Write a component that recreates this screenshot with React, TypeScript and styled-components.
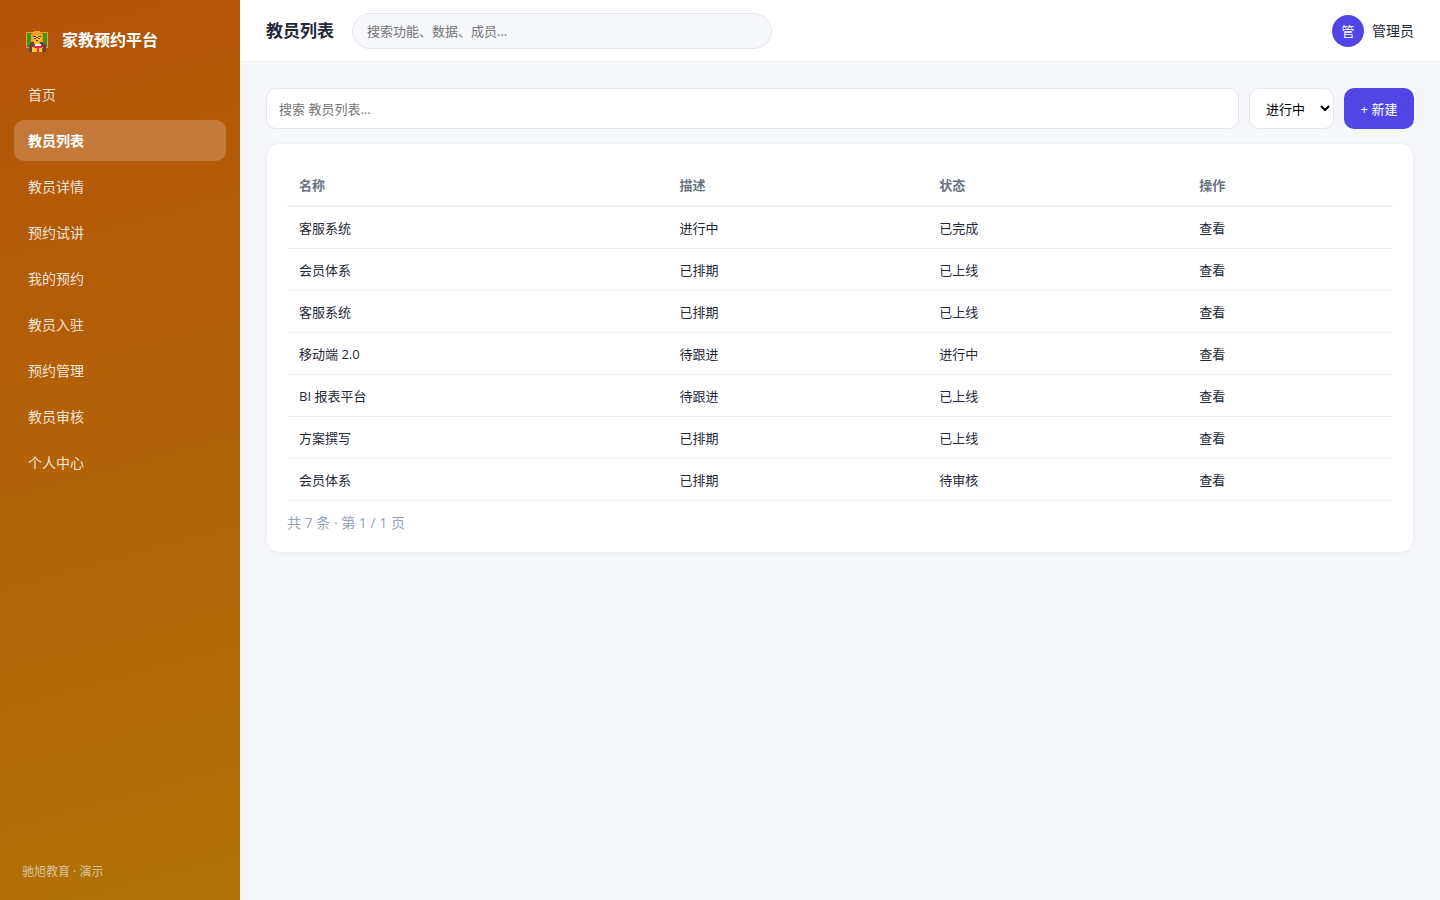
import React from 'react';
import styled, { createGlobalStyle } from 'styled-components';

const GlobalStyle = createGlobalStyle`
  *, *::before, *::after { box-sizing: border-box; }
  body {
    margin: 0;
    background: #f5f7fb;
    color: #1f2937;
    font-family: "Open Sans", "Noto Sans CJK SC", sans-serif;
    font-size: 14px;
    line-height: 20px;
  }
  button, input, select { font: inherit; }
`;

const Layout = styled.div`
  display: flex;
  min-height: 100vh;
`;

const Sidebar = styled.aside`
  display: flex;
  flex-direction: column;
  flex: 0 0 240px;
  padding: 22px 14px 18px;
  background: linear-gradient(165deg, #b45309, #b07207);
  color: #fff;
`;

const Brand = styled.div`
  display: flex;
  align-items: center;
  gap: 14px;
  height: 36px;
  margin-bottom: 16px;
  padding: 0 12px;
  font-size: 16px;
  font-weight: 700;
`;

const Nav = styled.nav`
  display: flex;
  flex-direction: column;
  gap: 5px;
`;

const NavLink = styled.a<{ $active?: boolean }>`
  display: flex;
  align-items: center;
  height: 41px;
  padding: 0 14px;
  border-radius: 10px;
  background: ${(p) => (p.$active ? 'rgba(255, 255, 255, 0.2)' : 'transparent')};
  color: ${(p) => (p.$active ? '#fff' : 'rgba(255, 255, 255, 0.85)')};
  font-weight: ${(p) => (p.$active ? 700 : 400)};
  text-decoration: none;
`;

const SidebarFooter = styled.div`
  margin-top: auto;
  padding: 0 8px;
  color: rgba(255, 255, 255, 0.6);
  font-size: 12px;
`;

const Main = styled.div`
  display: flex;
  flex: 1;
  flex-direction: column;
  min-width: 0;
`;

const Topbar = styled.header`
  display: flex;
  align-items: center;
  gap: 18px;
  height: 62px;
  padding: 0 26px;
  border-bottom: 1px solid #eceef3;
  background: #fff;
`;

const Title = styled.h1`
  margin: 0;
  font-size: 17px;
  font-weight: 700;
`;

const GlobalSearch = styled.input`
  flex: 0 1 420px;
  min-width: 0;
  height: 36px;
  padding: 0 14px;
  border: 1px solid #e5e7ef;
  border-radius: 18px;
  background: #f5f7fb;
  font-size: 13px;
  &::placeholder { color: #757575; }
`;

const User = styled.div`
  display: flex;
  align-items: center;
  gap: 8px;
  margin-left: auto;
`;

const Avatar = styled.span`
  display: grid;
  place-items: center;
  width: 32px;
  height: 32px;
  border-radius: 50%;
  background: #4f46e5;
  color: #fff;
  font-size: 13px;
`;

const Content = styled.main`
  padding: 26px;
`;

const Toolbar = styled.div`
  display: flex;
  gap: 10px;
  height: 41px;
  margin-bottom: 14px;
`;

const ListSearch = styled.input`
  flex: 1;
  min-width: 0;
  padding: 0 12px;
  border: 1px solid #e5e7ef;
  border-radius: 10px;
  background: #fff;
  font-size: 13px;
  &::placeholder { color: #757575; }
`;

const StatusSelect = styled.select`
  width: 85px;
  padding: 0 0 0 12px;
  border: 1px solid #e5e7ef;
  border-radius: 10px;
  background: #fff;
  color: #000;
  font-size: 13px;
`;

const CreateButton = styled.button`
  width: 70px;
  padding: 0;
  border: 0;
  border-radius: 10px;
  background: #4f46e5;
  color: #fff;
  font-size: 13px;
`;

const Card = styled.section`
  padding: 20px;
  border: 1px solid #f0f1f6;
  border-radius: 14px;
  background: #fff;
  box-shadow: 0 1px 4px rgba(30, 41, 80, 0.05);
`;

const Table = styled.table`
  width: 100%;
  border-collapse: separate;
  border-spacing: 0;
  table-layout: fixed;
  font-size: 13px;
`;

const HeadCell = styled.th<{ $width?: string }>`
  width: ${(p) => p.$width ?? 'auto'};
  height: 43px;
  padding: 0 12px;
  border-bottom: 2px solid #eef0f4;
  color: #6b7280;
  font-weight: 600;
  text-align: left;
`;

const Cell = styled.td`
  height: 42px;
  padding: 0 12px;
  border-bottom: 1px solid #eeeff2;
`;

const Pagination = styled.p`
  margin: 12px 0 0;
  color: #94a3b8;
  font-size: 14px;
  line-height: 19px;
`;

const TeacherIcon = () => (
  <svg width="22" height="26" viewBox="0 -4 22 26" shapeRendering="crispEdges" aria-hidden="true">
    <path fill="#e59a4b" d="M0 1h22v16H0z" />
    <path fill="#43921c" d="M1 2h20v14H1z" />
    <path fill="#f59e1b" d="M8 0h6v1h2v2h1v9h-2v1H7v-1H5V3h1V1h2z" />
    <path fill="#ffb92e" d="M8 4h6v1h1v5h-1v2h-1v2H9v-2H8v-2H7V5h1z" />
    <path fill="#ffd98a" d="M8 6h2v1H8zM12 6h2v1h-2z" />
    <path fill="#53351f" d="M7 5h3v1H7zM12 5h3v1h-3zM8 7h2v1H8zM10 6h2v1h-2zM12 7h2v1h-2zM10 9h2v1h-2z" />
    <path fill="#6b4538" d="M5 11h3v3h6v-3h3v1h2v2h1v7h-3v-5H6v5H3v-7h1v-2h1z" />
    <path fill="#ffc83d" d="M6 16h10v5H6zM9 11h4v2H9z" />
    <path fill="#e9eef2" d="M9 13h6v2H9z" />
    <path fill="#f5275e" d="M8 15h8v2h-3v4h-2v-4H8z" />
  </svg>
);

const navItems = ['首页', '教员列表', '教员详情', '预约试讲', '我的预约', '教员入驻', '预约管理', '教员审核', '个人中心'];

const rows = [
  ['客服系统', '进行中', '已完成'],
  ['会员体系', '已排期', '已上线'],
  ['客服系统', '已排期', '已上线'],
  ['移动端 2.0', '待跟进', '进行中'],
  ['BI 报表平台', '待跟进', '已上线'],
  ['方案撰写', '已排期', '已上线'],
  ['会员体系', '已排期', '待审核'],
];

export default function App() {
  return (
    <>
      <GlobalStyle />
      <Layout>
        <Sidebar>
          <Brand>
            <TeacherIcon />
            <span>家教预约平台</span>
          </Brand>
          <Nav aria-label="主导航">
            {navItems.map((item) => {
              const active = item === '教员列表';
              return (
                <NavLink key={item} href="#" $active={active} aria-current={active ? 'page' : undefined}>
                  {item}
                </NavLink>
              );
            })}
          </Nav>
          <SidebarFooter>驰旭教育 · 演示</SidebarFooter>
        </Sidebar>
        <Main>
          <Topbar>
            <Title>教员列表</Title>
            <GlobalSearch type="search" aria-label="全局搜索" placeholder="搜索功能、数据、成员..." />
            <User>
              <Avatar>管</Avatar>
              <span>管理员</span>
            </User>
          </Topbar>
          <Content>
            <Toolbar>
              <ListSearch type="search" aria-label="搜索教员列表" placeholder="搜索 教员列表..." />
              <StatusSelect aria-label="状态" defaultValue="进行中">
                <option>进行中</option>
                <option>已完成</option>
                <option>已上线</option>
                <option>待审核</option>
              </StatusSelect>
              <CreateButton type="button">+ 新建</CreateButton>
            </Toolbar>
            <Card>
              <Table>
                <thead>
                  <tr>
                    <HeadCell scope="col" $width="34.4%">名称</HeadCell>
                    <HeadCell scope="col" $width="23.5%">描述</HeadCell>
                    <HeadCell scope="col" $width="23.5%">状态</HeadCell>
                    <HeadCell scope="col">操作</HeadCell>
                  </tr>
                </thead>
                <tbody>
                  {rows.map(([name, description, status], index) => (
                    <tr key={index}>
                      <Cell>{name}</Cell>
                      <Cell>{description}</Cell>
                      <Cell>{status}</Cell>
                      <Cell>查看</Cell>
                    </tr>
                  ))}
                </tbody>
              </Table>
              <Pagination>共 7 条 · 第 1 / 1 页</Pagination>
            </Card>
          </Content>
        </Main>
      </Layout>
    </>
  );
}
